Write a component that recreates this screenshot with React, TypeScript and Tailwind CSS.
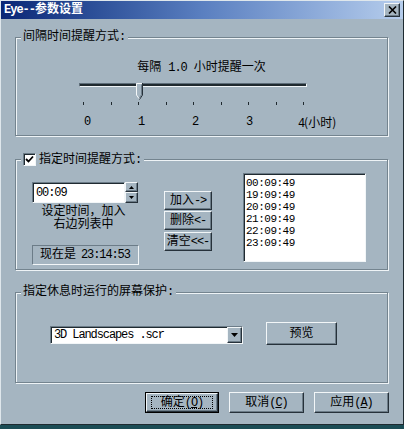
import type { ReactNode } from 'react';

const raised =
  'border border-t-[#f2f6f8] border-l-[#f2f6f8] border-r-[#26313a] border-b-[#26313a] shadow-[inset_-1px_-1px_0_#6c7c88]';
const sunken =
  'border border-t-[#6c7c88] border-l-[#6c7c88] border-r-[#f2f6f8] border-b-[#f2f6f8] shadow-[inset_1px_1px_0_#1f2a31]';
const latin = "font-['Liberation_Mono',monospace] text-[12px] tracking-[-1.1px]";
const listFont = "font-['Liberation_Mono',monospace] text-[11px] tracking-[-0.5px]";

function Group({ label, className, children }: { label: ReactNode; className: string; children: ReactNode }) {
  return (
    <div
      className={`relative ml-[14px] w-[373px] border border-[#74848f] shadow-[inset_1px_1px_0_#eef3f6,1px_1px_0_#eef3f6] ${className}`}
    >
      <div className="absolute -top-[7px] left-[5px] flex items-center bg-[#a5b5c1] px-[2px]">{label}</div>
      {children}
    </div>
  );
}

function Button({ className, children }: { className: string; children: ReactNode }) {
  return <div className={`flex items-center justify-center bg-[#a5b5c1] ${raised} ${className}`}>{children}</div>;
}

export default function App() {
  const times = ['00:09:49', '19:09:49', '20:09:49', '21:09:49', '22:09:49', '23:09:49'];
  const ticks = [0, 1, 2, 3, 4, 5, 6, 7, 8];

  return (
    <div className="h-[429px] w-[404px] bg-[#1b4c55]">
      <div className="flex h-[425px] w-[404px] flex-col border border-t-[#dfe7ec] border-l-[#dfe7ec] border-r-[#1e2a30] border-b-[#1e2a30] bg-[#a5b5c1] font-['Liberation_Mono','Noto_Sans_CJK_SC',monospace] text-[12px] leading-[12px] text-black">
        {/* title bar */}
        <div className="flex h-[18px] items-center bg-linear-to-r from-[#0a2676] via-[#5a7fc0] to-[#b6cdec] pl-[3px] pr-[3px]">
          <span className="font-bold text-white">
            <span className="font-['Liberation_Mono',monospace] text-[12px] tracking-[-1px]">Eye--</span>参数设置
          </span>
          <div className={`ml-auto flex h-[14px] w-[16px] items-center justify-center bg-[#a5b5c1] ${raised}`}>
            <svg width="9" height="8" viewBox="0 0 9 8">
              <path d="M1 0.5 L8 7.5 M8 0.5 L1 7.5" stroke="#000" strokeWidth="1.6" />
            </svg>
          </div>
        </div>

        {/* interval group */}
        <Group label="间隔时间提醒方式:" className="mt-[18px] h-[99px]">
          <div className="pt-[24px] text-center">
            每隔 <span className={latin}>1.0</span> 小时提醒一次
          </div>
          <div className="relative ml-[63px] mt-[9px] h-[17px] w-[228px]">
            <div className="mt-[5px] h-[4px] border border-t-[#5d6d79] border-l-[#5d6d79] border-r-[#eef3f6] border-b-[#eef3f6] bg-[#1f292f]" />
            <svg className="absolute left-[57px] top-0" width="7" height="17" viewBox="0 0 7 17">
              <path d="M0 0 H7 V12 L3.5 16.5 L0 12 Z" fill="#a5b5c1" />
              <path d="M0.5 12 V0.5 H6" stroke="#f4f7f9" fill="none" />
              <path d="M6.5 0 V12 L3.5 16.5" stroke="#26313a" fill="none" />
              <path d="M5.5 1.5 V11.7 L3.5 14.8" stroke="#6c7c88" fill="none" />
              <path d="M0.5 12 L3 15.5" stroke="#f4f7f9" fill="none" />
            </svg>
          </div>
          <div className="ml-[67px] mt-[2px] flex w-[221px] justify-between">
            {ticks.map((t) => (
              <div key={t} className="h-[3px] w-[1px] bg-[#1f292f]" />
            ))}
          </div>
          <div className={`ml-[68px] mt-[11px] flex whitespace-nowrap ${latin}`}>
            <span className="w-[54px]">0</span>
            <span className="w-[54px]">1</span>
            <span className="w-[54px]">2</span>
            <span className="w-[52px]">3</span>
            <span>
              4<span className="font-['Noto_Sans_CJK_SC',sans-serif] text-[12px] tracking-normal">(小时)</span>
            </span>
          </div>
        </Group>

        {/* fixed time group */}
        <Group
          className="mt-[23px] h-[111px]"
          label={
            <>
              <div className={`mr-[3px] flex h-[13px] w-[13px] items-center justify-center bg-white ${sunken}`}>
                <svg width="9" height="9" viewBox="0 0 9 9">
                  <path d="M1 4 L3.5 6.5 L8 1.5" stroke="#000" strokeWidth="1.8" fill="none" />
                </svg>
              </div>
              <span>指定时间提醒方式:</span>
            </>
          }
        >
          <div className="flex items-start pt-[13px]">
            <div className="ml-[16px] mt-[9px] w-[107px]">
              <div className="flex h-[21px] w-[106px]">
                <div className={`flex flex-1 items-center bg-white pl-[3px] ${sunken} ${latin}`}>00:09</div>
                <div className="flex w-[13px] flex-col">
                  <div className={`flex h-[10px] items-center justify-center bg-[#a5b5c1] ${raised}`}>
                    <svg width="5" height="3" viewBox="0 0 5 3">
                      <path d="M2.5 0 L5 3 H0 Z" fill="#000" />
                    </svg>
                  </div>
                  <div className={`flex h-[11px] items-center justify-center bg-[#a5b5c1] ${raised}`}>
                    <svg width="5" height="3" viewBox="0 0 5 3">
                      <path d="M0 0 H5 L2.5 3 Z" fill="#000" />
                    </svg>
                  </div>
                </div>
              </div>
              <div className="mt-[3px] pr-[4px] text-center leading-[13px]">
                <div>设定时间，加入</div>
                <div>右边列表中</div>
              </div>
              <div className={`mt-[13px] flex h-[20px] w-[107px] items-center pl-[7px] ${sunken} shadow-none`}>
                现在是 <span className={`ml-[5px] ${latin}`}>23:14:53</span>
              </div>
            </div>

            <div className="ml-[25px] mt-[18px] flex w-[48px] flex-col gap-[1px]">
              <Button className="h-[19px]">
                加入<span className={latin}>-&gt;</span>
              </Button>
              <Button className="h-[19px]">
                删除<span className={latin}>&lt;-</span>
              </Button>
              <Button className="mt-[1px] h-[19px]">
                清空<span className={latin}>&lt;&lt;-</span>
              </Button>
            </div>

            <div className={`ml-[31px] h-[89px] w-[123px] bg-white pl-[2px] pt-[3px] ${sunken}`}>
              {times.map((t) => (
                <div key={t} className={`h-[12px] leading-[12px] ${listFont}`}>
                  {t}
                </div>
              ))}
            </div>
          </div>
        </Group>

        {/* screen saver group */}
        <Group label="指定休息时运行的屏幕保护:" className="mt-[22px] h-[91px]">
          <div className="flex items-start pt-[29px]">
            <div className={`ml-[34px] mt-[4px] flex h-[18px] w-[193px] bg-white ${sunken}`}>
              <div className={`flex flex-1 items-center pl-[3px] ${latin}`}>3D Landscapes .scr</div>
              <div className={`flex w-[15px] items-center justify-center bg-[#a5b5c1] ${raised}`}>
                <svg width="7" height="4" viewBox="0 0 7 4">
                  <path d="M0 0 H7 L3.5 4 Z" fill="#000" />
                </svg>
              </div>
            </div>
            <Button className="ml-[23px] h-[23px] w-[71px]">预览</Button>
          </div>
        </Group>

        {/* dialog buttons */}
        <div className="mr-[14px] mt-[9px] flex justify-end gap-[10px]">
          <div className="h-[21px] w-[74px] border border-black">
            <Button className="h-full w-full">
              <span className="flex h-[13px] w-[62px] items-center justify-center border border-dotted border-black">
                确定<span className={latin}>(<span className="underline">O</span>)</span>
              </span>
            </Button>
          </div>
          <Button className="h-[21px] w-[75px]">
            取消<span className={latin}>(<span className="underline">C</span>)</span>
          </Button>
          <Button className="h-[21px] w-[75px]">
            应用<span className={latin}>(<span className="underline">A</span>)</span>
          </Button>
        </div>
      </div>
    </div>
  );
}
